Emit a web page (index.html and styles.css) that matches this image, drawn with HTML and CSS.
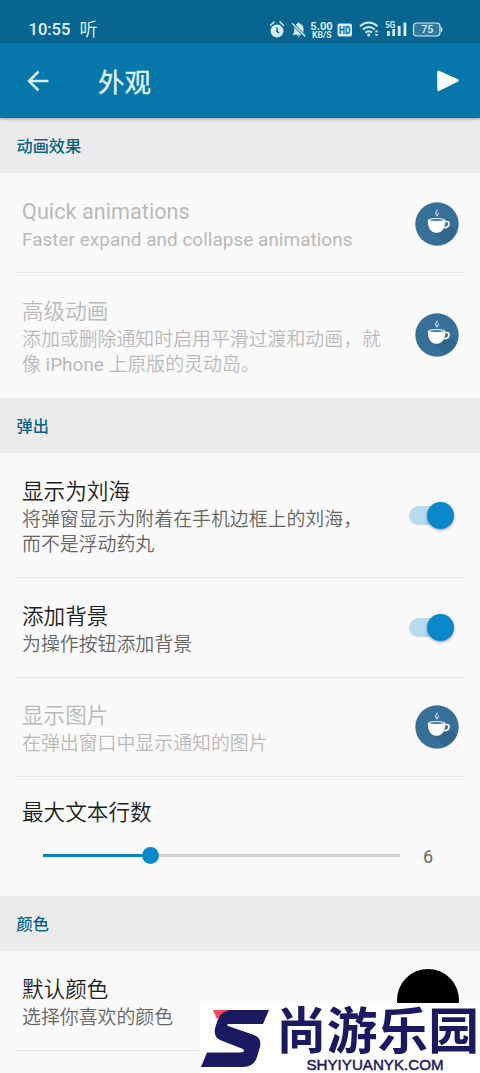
FILE: index.html
```html
<!DOCTYPE html>
<html lang="zh-CN">
<head>
<meta charset="utf-8">
<title>外观</title>
<link rel="stylesheet" href="styles.css">
</head>
<body>
<svg class="defs" width="0" height="0" aria-hidden="true">
  <symbol id="coffee" viewBox="0 0 44 44">
    <circle cx="22" cy="22" r="21.700" fill="#366f98"/>
    <path d="M27 28 L34 23 L41 30 Q37 38 30 41 L18 30Z" fill="#30658c"/>
    <path d="M29.500 19.500h2.200c2 0 2.400 1 2.200 2.600-.2 2.400-1.500 3.600-4.700 3.600" fill="none" stroke="#fff" stroke-width="1.700"/>
    <path d="M12.800 18.300c0 5 1 8.800 4.200 11.200 2.500 1.700 6.500 1.700 9 0 3.200-2.400 4.400-6.200 4.400-11.200z" fill="#fff"/>
    <ellipse cx="21.600" cy="18" rx="8.300" ry="1.400" fill="#366f98" stroke="#fff" stroke-width="1"/>
    <path d="M22 7.500c.8 2-1.800 2.500-1.300 4.300.2 1 1.500 1.300 1.100 2.600M23 10.500c.8 1.500-.8 2-.4 3.200" fill="none" stroke="#fff" stroke-width="1"/>
  </symbol>
</svg>
<div class="screen">
  <div class="statusbar">
    <span class="clock">10:55</span><span class="listen">听</span>
    <svg class="status-icons" width="180" height="20" viewBox="0 0 180 20">
      <g fill="#d7eefa">
        <circle cx="7" cy="11" r="6.500"/>
        <path d="M.5 5.200 4 2M13.500 5.200 10 2" stroke="#d7eefa" stroke-width="1.500" stroke-linecap="round"/>
        <path d="M7 7.500V11.500L9.200 12.800" fill="none" stroke="#08658f" stroke-width="1.400"/>
        <path d="M28.500 2.500a1.300 1.300 0 0 1 1.300 1.200c2.600.6 3.700 2.700 3.700 5.300v3.500l2 2.300H22.200l2-2.300V9c0-2.600 1-4.700 3.200-5.300a1.200 1.200 0 0 1 1.100-1.200z"/>
        <path d="M26.800 15.500h3.500q-1.700 2.300-3.500 0"/>
        <path d="M22 3.200 35.300 16.500" stroke="#08658f" stroke-width="3"/>
        <path d="M22 3.200 35.300 16.500" stroke="#d7eefa" stroke-width="1.300"/>
        <text x="40.300" y="9.500" class="rate" textLength="22.500" lengthAdjust="spacingAndGlyphs">5.00</text>
        <text x="42" y="17.700" class="unit" textLength="19.500" lengthAdjust="spacingAndGlyphs">KB/S</text>
        <rect x="67.500" y="3.500" width="14.500" height="13" rx="2"/>
        <text x="69" y="13.700" class="hd" textLength="11.500" lengthAdjust="spacingAndGlyphs">HD</text>
        <g fill="none" stroke="#d7eefa" stroke-width="2">
          <path d="M90 6.200q8.500-7.500 17.500 0M92.800 9.500q6-5 12 0M95.500 12.600q3.300-2.600 6.500 0"/>
        </g>
        <circle cx="98.700" cy="15" r="1.500"/>
        <path d="m104.500 12.200 2-2.200 2 2.200zM104.500 14l2 2.200 2-2.200z"/>
        <text x="115.300" y="7.800" class="five" textLength="10" lengthAdjust="spacingAndGlyphs">5G</text>
        <path d="M117 11h2.800v5H117zM122.300 9h2.800v7h-2.800zM127.800 6h2.800v10h-2.800zM133.500 2.500h2.800V16h-2.800z"/>
        <rect x="143.500" y="3" width="26.500" height="13" rx="3.500" fill="#32799c" stroke="#d7eefa" stroke-width="1.200"/>
        <path d="M171.300 7.500q1.800 1.800 0 4z" stroke="#d7eefa"/>
        <text x="151.300" y="13.200" class="battery" textLength="12" lengthAdjust="spacingAndGlyphs">75</text>
      </g>
    </svg>
  </div>
  <header class="appbar">
    <svg width="24" height="24" viewBox="0 0 24 24"><path d="M22.500 12H3.500M12.500 2.500 3 12l9.500 9.500" fill="none" stroke="#d9effa" stroke-width="2.500"/></svg>
    <h1>外观</h1>
    <svg class="play" width="24" height="24" viewBox="0 0 24 24"><path d="M2.500 3 21.500 11.500 2.500 21z" fill="#fff" stroke="#fff" stroke-width="2.500" stroke-linejoin="round"/></svg>
  </header>
  <main>
    <h2>动画效果</h2>
    <section class="row disabled">
      <div class="copy"><h3 class="latin">Quick animations</h3><p class="latin">Faster expand and collapse animations</p></div>
      <svg class="coffee"><use href="#coffee"/></svg>
    </section>
    <section class="row disabled tall last">
      <div class="copy"><h3>高级动画</h3><p>添加或删除通知时启用平滑过渡和动画，就<br>像 <span class="latin">iPhone</span> 上原版的灵动岛。</p></div>
      <svg class="coffee"><use href="#coffee"/></svg>
    </section>
    <h2>弹出</h2>
    <section class="row tall">
      <div class="copy"><h3>显示为刘海</h3><p>将弹窗显示为附着在手机边框上的刘海，<br>而不是浮动药丸</p></div>
      <div class="switch"><span class="thumb"></span></div>
    </section>
    <section class="row">
      <div class="copy"><h3>添加背景</h3><p>为操作按钮添加背景</p></div>
      <div class="switch"><span class="thumb"></span></div>
    </section>
    <section class="row disabled short">
      <div class="copy"><h3>显示图片</h3><p>在弹出窗口中显示通知的图片</p></div>
      <svg class="coffee"><use href="#coffee"/></svg>
    </section>
    <section class="lines">
      <h3>最大文本行数</h3>
      <div class="slider">
        <div class="track"><span class="fill"></span><span class="knob"></span><span class="rest"></span></div>
        <span class="value">6</span>
      </div>
    </section>
    <h2>颜色</h2>
    <section class="row color-row">
      <div class="copy"><h3>默认颜色</h3><p>选择你喜欢的颜色</p></div>
      <span class="swatch"></span>
    </section>
  </main>
  <div class="watermark">
    <svg width="280" height="70" viewBox="0 0 280 70">
      <path d="M13 7H31L17 16z" fill="#fb4660"/>
      <path d="M69 7 63 21H29Q26 21 28 23L54 32Q62 35 60 44L57 54Q54 64 43 64H1L7 49.500H40Q46 49 43 46L20 37Q12 33 16 22 20 7 31 7z" fill="#1b1a60"/>
      <text x="76" y="45.500" class="brand" textLength="203" lengthAdjust="spacingAndGlyphs">尚游乐园</text>
      <text x="106.500" y="66.500" class="domain" textLength="137" lengthAdjust="spacingAndGlyphs">SHYIYUANYK.COM</text>
    </svg>
  </div>
</div>
</body>
</html>
```
FILE: styles.css
```css
* { box-sizing: border-box; }
body, h1, h2, h3, p { margin: 0; }
body { font-family: Roboto, "Noto Sans CJK SC", sans-serif; background: #fafafa; }
.defs { position: absolute; }
.screen { position: relative; width: 480px; height: 1073px; overflow: hidden; background: #fafafa; }
.statusbar { display: flex; align-items: center; height: 43px; padding: 17px 0 0 28.500px; background: #08658f; color: #e2f4fd; }
.clock { width: 51px; font-size: 16.500px; font-weight: 500; line-height: 24px; }
.listen { width: 18px; font-size: 18px; font-weight: 350; line-height: 24px; }
.status-icons { margin-left: 172.500px; }
.rate { font: 700 11.500px Roboto, sans-serif; }
.unit { font: 700 8.800px Roboto, sans-serif; }
.hd { font: 700 10px Roboto, sans-serif; fill: #08658f; }
.five { font: 700 8.500px Roboto, sans-serif; }
.battery { font: 500 10.500px Roboto, sans-serif; }
.appbar { display: flex; align-items: center; height: 75px; padding: 1px 20px 0 26px; background: #0577aa; box-shadow: 0 1px 3px #0005; position: relative; }
.appbar h1 { flex: 1; padding: 3px 0 0 48px; font-size: 26.500px; font-weight: 400; line-height: 36px; color: #e2f4fd; -webkit-text-stroke: .3px #e2f4fd; }
h2 { height: 55px; padding-left: 16.500px; font-size: 16.200px; font-weight: 500; line-height: 58px; color: #0b6389; background: #ebebeb; }
.row { display: flex; justify-content: space-between; height: 100px; margin: 0 16px; padding: 25px 5px 0 6px; border-bottom: 1.500px solid #e5e5e5; }
.row.tall { height: 125px; }
.row.short { height: 99px; padding-top: 24px; }
.row.last { border-bottom: 0; }
.copy { white-space: nowrap; }
h3 { font-size: 21.600px; font-weight: 350; line-height: 28px; color: #1d1d1d; }
.row p { padding-top: 1px; font-size: 18.900px; font-weight: 350; line-height: 25px; color: #666; }
.disabled h3, .disabled p { color: #b9b9b9; }
.row .latin { font-weight: 400; letter-spacing: .05px; }
.coffee { width: 44px; height: 44px; margin-top: 3.500px; }
.tall .coffee { margin-top: 15px; }
.short .coffee { margin-top: 3px; }
.switch { display: flex; justify-content: flex-end; align-items: center; width: 45px; height: 19px; margin-right: 5px; border-radius: 10px; background: #b7dbed; }
.tall .switch { margin-top: 28px; }
.row:not(.tall) .switch { margin-top: 15px; }
.thumb { width: 27px; height: 27px; flex: none; border-radius: 50%; background: #0a88cb; box-shadow: 0 1px 3px #0006; }
.lines { height: 118.500px; padding: 22px 22px 0; }
.slider { display: flex; align-items: center; gap: 23px; height: 32px; margin: 12.500px 0 0 21px; }
.track { display: flex; align-items: center; width: 357px; }
.fill { width: 99px; height: 3px; background: #0a83bd; }
.knob { width: 17px; height: 17px; border-radius: 50%; background: #0a88cb; }
.rest { flex: 1; height: 3px; background: #d2d2d2; }
.value { padding-top: 3px; font-size: 18px; line-height: 24px; color: #666; }
.swatch { width: 62px; height: 62px; margin: -6.500px .5px 0 0; border-radius: 50%; background: #000; }
.color-row { border-bottom-color: #dedede; }
.watermark { position: absolute; left: 200px; top: 1003px; width: 280px; height: 70px; background: #fff; }
.watermark svg { overflow: visible; }
.brand { font: 700 50px "Noto Sans CJK SC", sans-serif; fill: #1b1a60; }
.domain { font: 400 15.500px "Liberation Sans", Arial, sans-serif; fill: #1b1a60; stroke: #1b1a60; stroke-width: .5px; }
```
